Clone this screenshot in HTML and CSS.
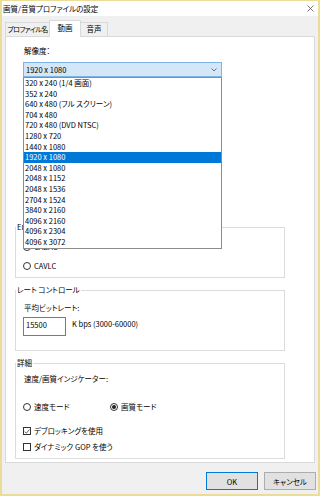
FILE: index.html
```html
<!DOCTYPE html>
<html lang="ja">
  <head>
    <meta charset="UTF-8" />
    <meta name="viewport" content="width=device-width, initial-scale=1.0" />
    <title>画質/音質プロファイルの設定</title>
    <link rel="stylesheet" href="styles.css">
  </head>
  <body>
    <div class="window">
      <div class="titlebar">
        <span class="title">画質/音質プロファイルの設定</span>
        <svg class="close" width="7" height="7" viewBox="0 0 7 7">
          <path d="M0.5 0.5 L6.5 6.5 M6.5 0.5 L0.5 6.5" stroke="#555" stroke-width="0.8" fill="none" />
        </svg>
      </div>

      <div class="tabs">
        <div class="tab tab-name">プロファイル名</div>
        <div class="tab tab-video active">動画</div>
        <div class="tab tab-audio">音声</div>
      </div>

      <div class="panel">
        <div class="field-label">解像度：</div>
        <div class="combo">
          <span class="combo-value">1920 x 1080</span>
          <svg class="combo-arrow" width="6" height="4" viewBox="0 0 6 4">
            <path d="M0.5 0.5 L3 3 L5.5 0.5" stroke="#555" stroke-width="0.8" fill="none" />
          </svg>
          <ul class="dropdown">
            <li>320 x 240 (1/4 画面)</li>
            <li>352 x 240</li>
            <li>640 x 480 (フル スクリーン)</li>
            <li>704 x 480</li>
            <li>720 x 480 (DVD NTSC)</li>
            <li>1280 x 720</li>
            <li>1440 x 1080</li>
            <li class="selected">1920 x 1080</li>
            <li>2048 x 1080</li>
            <li>2048 x 1152</li>
            <li>2048 x 1536</li>
            <li>2704 x 1524</li>
            <li>3840 x 2160</li>
            <li>4096 x 2160</li>
            <li>4096 x 2304</li>
            <li>4096 x 3072</li>
          </ul>
        </div>

        <fieldset class="group group-entropy">
          <legend>En</legend>
          <label class="option first"><span class="radio checked"></span>CABAC</label>
          <label class="option second"><span class="radio"></span>CAVLC</label>
        </fieldset>

        <fieldset class="group group-rate">
          <legend>レート コントロール</legend>
          <div class="group-text">平均ビットレート:</div>
          <div class="rate-row">
            <div class="textbox">15500</div>
            <span class="unit">K bps (3000-60000)</span>
          </div>
        </fieldset>

        <fieldset class="group group-detail">
          <legend>詳細</legend>
          <div class="group-text">速度/画質インジケーター:</div>
          <div class="mode-row">
            <label class="option mode"><span class="radio"></span>速度モード</label>
            <label class="option"><span class="radio checked"></span>画質モード</label>
          </div>
          <label class="option check-first">
            <span class="checkbox">
              <svg width="7" height="7" viewBox="0 0 7 7">
                <path d="M0.8 3.6 L2.7 5.5 L6.3 1.2" stroke="#333" stroke-width="0.9" fill="none" />
              </svg>
            </span>デブロッキングを使用
          </label>
          <label class="option check-second"><span class="checkbox"></span>ダイナミック GOP を使う</label>
        </fieldset>
      </div>

      <div class="buttons">
        <button class="btn btn-default">OK</button>
        <button class="btn">キャンセル</button>
      </div>
    </div>
  </body>
</html>
```

FILE: styles.css
```css
* {
  box-sizing: border-box;
}

body {
  margin: 0;
  font-family: "Noto Sans CJK JP", "Noto Sans", sans-serif;
  font-feature-settings: "palt";
  font-size: 7.5px;
  color: #000;
}

.window {
  width: 320px;
  height: 496px;
  border: 2px solid #ebdd98;
  border-top-width: 1px;
  background-color: #f0f0f0;
  display: flex;
  flex-direction: column;
}

.titlebar {
  height: 15px;
  background-color: white;
  display: flex;
  align-items: center;
  justify-content: space-between;
  padding: 0 4px 0 1px;
}

.title {
  line-height: 15px;
}

.close {
  display: block;
}

.tabs {
  height: 20px;
  padding-left: 3px;
  display: flex;
  align-items: flex-end;
}

.tab {
  height: 14px;
  line-height: 12px;
  text-align: center;
  white-space: nowrap;
  overflow: hidden;
  border: 1px solid #d9d9d9;
  border-bottom: none;
  background-color: #f0f0f0;
}

.tab-name {
  width: 45px;
  font-size: 7px;
  letter-spacing: -0.6px;
}

.tab-video {
  width: 32px;
  margin-left: -1px;
}

.tab-audio {
  width: 28px;
  margin-left: -1px;
}

.tab.active {
  height: 17px;
  line-height: 14px;
  margin-bottom: -1px;
  background-color: white;
  position: relative;
  z-index: 1;
}

.panel {
  flex: 1;
  margin: 0 3px;
  background-color: white;
  border: 1px solid #d9d9d9;
}

.field-label {
  margin: 8px 0 0 18px;
  line-height: 12px;
}

.combo {
  position: relative;
  margin: 5px 0 0 17px;
  width: 199px;
  height: 15px;
  padding: 0 4px 0 2px;
  border: 1px solid #7eb4ea;
  background-color: #d3e7f8;
  display: flex;
  align-items: center;
  justify-content: space-between;
}

.combo-arrow {
  display: block;
}

.dropdown {
  position: absolute;
  top: 14px;
  left: -1px;
  width: 199px;
  margin: 0;
  padding: 0;
  list-style: none;
  background-color: white;
  border: 1px solid #8c8c8c;
  z-index: 2;
}

.dropdown li {
  height: 10.6px;
  line-height: 10.6px;
  padding-left: 1px;
  white-space: nowrap;
}

.dropdown li.selected {
  background-color: #0078d7;
  color: white;
}

.group {
  width: 270px;
  margin: 0 0 0 9px;
  padding: 0 0 5px 7px;
  border: 1px solid #dcdcdc;
  min-width: 0;
}

.group legend {
  padding: 0 1px;
  margin-left: -7px;
  line-height: 10px;
}

.group-entropy {
  margin-top: 145px;
}

.group-rate {
  margin-top: 7px;
  padding-bottom: 14px;
}

.group-detail {
  margin-top: 7px;
}

.option {
  display: flex;
  align-items: center;
  gap: 3px;
  height: 12px;
  line-height: 12px;
}

.option.first {
  margin-top: 9px;
}

.option.second {
  margin-top: 7px;
}

.radio {
  width: 8px;
  height: 8px;
  border: 1px solid #333;
  border-radius: 50%;
  display: flex;
  align-items: center;
  justify-content: center;
}

.radio.checked::after {
  content: "";
  width: 4px;
  height: 4px;
  border-radius: 50%;
  background-color: #222;
}

.checkbox {
  width: 8px;
  height: 8px;
  border: 1px solid #333;
  display: flex;
  align-items: center;
  justify-content: center;
}

.checkbox svg {
  display: block;
}

.group-text {
  margin: 7px 0 0 1px;
  line-height: 12px;
}

.group-detail .group-text {
  margin-top: 5px;
}

.rate-row {
  margin-top: 3px;
  display: flex;
  align-items: flex-start;
}

.textbox {
  width: 43px;
  height: 19px;
  border: 1px solid #7a7a7a;
  padding: 1px 0 0 2px;
  line-height: 12px;
}

.unit {
  margin: 1px 0 0 6px;
  line-height: 12px;
}

.mode-row {
  margin-top: 16px;
  display: flex;
}

.option.mode {
  width: 87px;
}

.check-first {
  margin-top: 12px;
}

.check-second {
  margin-top: 4px;
}

.buttons {
  height: 31px;
  padding: 9px 2px 0 0;
  display: flex;
  justify-content: flex-end;
  align-items: flex-start;
  gap: 6px;
}

.btn {
  width: 52px;
  height: 18px;
  padding: 0;
  font: inherit;
  color: #000;
  background-color: #e1e1e1;
  border: 1px solid #adadad;
}

.btn-default {
  border-color: #0078d7;
}
```
